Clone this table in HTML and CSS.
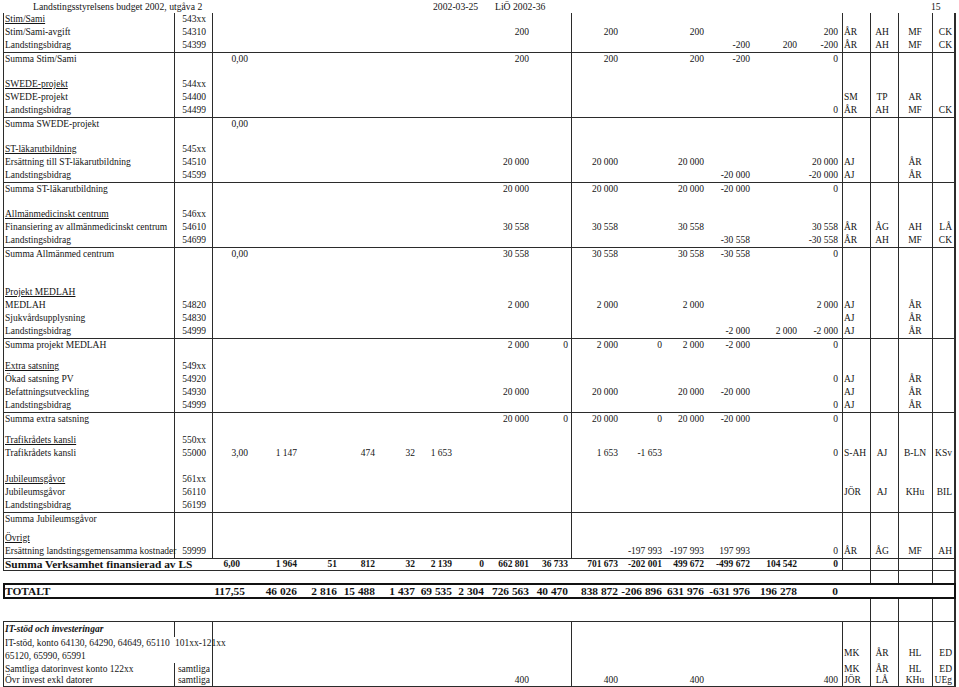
FILE: index.html
```html
<!DOCTYPE html>
<html lang="sv">
<head>
<meta charset="utf-8">
<title>Landstingsstyrelsens budget 2002</title>
<link rel="stylesheet" href="styles.css">
</head>
<body>
<div class="head"><span class="h-title">Landstingsstyrelsens budget 2002, utgåva 2</span><span>2002-03-25</span><span>LiÖ 2002-36</span><span>15</span></div>
<div class="sheet">
  <div class="row std"><span class="a u">Stim/Sami</span><span class="b">543xx</span></div>
  <div class="row std"><span class="a">Stim/Sami-avgift</span><span class="b">54310</span><span class="n8">200</span><span class="n10">200</span><span class="n12">200</span><span class="n15">200</span><span class="k1">ÅR</span><span class="k2">AH</span><span class="k3">MF</span><span class="k4">CK</span></div>
  <div class="row std"><span class="a">Landstingsbidrag</span><span class="b">54399</span><span class="n13">-200</span><span class="n14">200</span><span class="n15">-200</span><span class="k1">ÅR</span><span class="k2">AH</span><span class="k3">MF</span><span class="k4">CK</span></div>
  <div class="row std top"><span class="a">Summa Stim/Sami</span><span class="n1">0,00</span><span class="n8">200</span><span class="n10">200</span><span class="n12">200</span><span class="n13">-200</span><span class="n15">0</span></div>
  <div class="row std"></div>
  <div class="row std"><span class="a u">SWEDE-projekt</span><span class="b">544xx</span></div>
  <div class="row std"><span class="a">SWEDE-projekt</span><span class="b">54400</span><span class="k1">SM</span><span class="k2">TP</span><span class="k3">AR</span></div>
  <div class="row std"><span class="a">Landstingsbidrag</span><span class="b">54499</span><span class="n15">0</span><span class="k1">ÅR</span><span class="k2">AH</span><span class="k3">MF</span><span class="k4">CK</span></div>
  <div class="row std top"><span class="a">Summa SWEDE-projekt</span><span class="n1">0,00</span></div>
  <div class="row std"></div>
  <div class="row std"><span class="a u">ST-läkarutbildning</span><span class="b">545xx</span></div>
  <div class="row std"><span class="a">Ersättning till ST-läkarutbildning</span><span class="b">54510</span><span class="n8">20 000</span><span class="n10">20 000</span><span class="n12">20 000</span><span class="n15">20 000</span><span class="k1">AJ</span><span class="k3">ÅR</span></div>
  <div class="row std"><span class="a">Landstingsbidrag</span><span class="b">54599</span><span class="n13">-20 000</span><span class="n15">-20 000</span><span class="k1">AJ</span><span class="k3">ÅR</span></div>
  <div class="row std top"><span class="a">Summa ST-läkarutbildning</span><span class="n8">20 000</span><span class="n10">20 000</span><span class="n12">20 000</span><span class="n13">-20 000</span><span class="n15">0</span></div>
  <div class="row std"></div>
  <div class="row std"><span class="a u">Allmänmedicinskt centrum</span><span class="b">546xx</span></div>
  <div class="row std"><span class="a">Finansiering av allmänmedicinskt centrum</span><span class="b">54610</span><span class="n8">30 558</span><span class="n10">30 558</span><span class="n12">30 558</span><span class="n15">30 558</span><span class="k1">ÅR</span><span class="k2">ÅG</span><span class="k3">AH</span><span class="k4">LÅ</span></div>
  <div class="row std"><span class="a">Landstingsbidrag</span><span class="b">54699</span><span class="n13">-30 558</span><span class="n15">-30 558</span><span class="k1">ÅR</span><span class="k2">AH</span><span class="k3">MF</span><span class="k4">CK</span></div>
  <div class="row std top"><span class="a">Summa Allmänmed centrum</span><span class="n1">0,00</span><span class="n8">30 558</span><span class="n10">30 558</span><span class="n12">30 558</span><span class="n13">-30 558</span><span class="n15">0</span></div>
  <div class="row std"></div>
  <div class="row std"></div>
  <div class="row std"><span class="a u">Projekt MEDLAH</span></div>
  <div class="row std"><span class="a">MEDLAH</span><span class="b">54820</span><span class="n8">2 000</span><span class="n10">2 000</span><span class="n12">2 000</span><span class="n15">2 000</span><span class="k1">AJ</span><span class="k3">ÅR</span></div>
  <div class="row std"><span class="a">Sjukvårdsupplysning</span><span class="b">54830</span><span class="k1">AJ</span><span class="k3">ÅR</span></div>
  <div class="row std"><span class="a">Landstingsbidrag</span><span class="b">54999</span><span class="n13">-2 000</span><span class="n14">2 000</span><span class="n15">-2 000</span><span class="k1">AJ</span><span class="k3">ÅR</span></div>
  <div class="row std top"><span class="a">Summa projekt MEDLAH</span><span class="n8">2 000</span><span class="n9">0</span><span class="n10">2 000</span><span class="n11">0</span><span class="n12">2 000</span><span class="n13">-2 000</span><span class="n15">0</span></div>
  <div class="row std h9"></div>
  <div class="row std"><span class="a u">Extra satsning</span><span class="b">549xx</span></div>
  <div class="row std"><span class="a">Ökad satsning PV</span><span class="b">54920</span><span class="n15">0</span><span class="k1">AJ</span><span class="k3">ÅR</span></div>
  <div class="row std"><span class="a">Befattningsutveckling</span><span class="b">54930</span><span class="n8">20 000</span><span class="n10">20 000</span><span class="n12">20 000</span><span class="n13">-20 000</span><span class="k1">AJ</span><span class="k3">ÅR</span></div>
  <div class="row std"><span class="a">Landstingsbidrag</span><span class="b">54999</span><span class="n15">0</span><span class="k1">AJ</span><span class="k3">ÅR</span></div>
  <div class="row std top"><span class="a">Summa extra satsning</span><span class="n8">20 000</span><span class="n9">0</span><span class="n10">20 000</span><span class="n11">0</span><span class="n12">20 000</span><span class="n13">-20 000</span><span class="n15">0</span></div>
  <div class="row std h9"></div>
  <div class="row std"><span class="a u">Trafikrådets kansli</span><span class="b">550xx</span></div>
  <div class="row std"><span class="a">Trafikrådets kansli</span><span class="b">55000</span><span class="n1">3,00</span><span class="n2">1 147</span><span class="n4">474</span><span class="n5">32</span><span class="n6">1 653</span><span class="n10">1 653</span><span class="n11">-1 653</span><span class="n15">0</span><span class="k1">S-AH</span><span class="k2">AJ</span><span class="k3">B-LN</span><span class="k4">KSv</span></div>
  <div class="row std"></div>
  <div class="row std"><span class="a u">Jubileumsgåvor</span><span class="b">561xx</span></div>
  <div class="row std"><span class="a">Jubileumsgåvor</span><span class="b">56110</span><span class="k1">JÖR</span><span class="k2">AJ</span><span class="k3">KHu</span><span class="k4">BIL</span></div>
  <div class="row std"><span class="a">Landstingsbidrag</span><span class="b">56199</span></div>
  <div class="row std top"><span class="a">Summa Jubileumsgåvor</span></div>
  <div class="row std h7"></div>
  <div class="row std"><span class="a u">Övrigt</span></div>
  <div class="row std"><span class="a">Ersättning landstingsgemensamma kostnader</span><span class="b">59999</span><span class="n11">-197 993</span><span class="n12">-197 993</span><span class="n13">197 993</span><span class="n15">0</span><span class="k1">ÅR</span><span class="k2">ÅG</span><span class="k3">MF</span><span class="k4">AH</span></div>
  <div class="row sv top bot"><span class="a">Summa Verksamhet finansierad av LS</span><span class="n1">6,00</span><span class="n2">1 964</span><span class="n3">51</span><span class="n4">812</span><span class="n5">32</span><span class="n6">2 139</span><span class="n7">0</span><span class="n8">662 801</span><span class="n9">36 733</span><span class="n10">701 673</span><span class="n11">-202 001</span><span class="n12">499 672</span><span class="n13">-499 672</span><span class="n14">104 542</span><span class="n15">0</span></div>
  <div class="row gap h12"></div>
  <div class="row tot"><span class="a">TOTALT</span><span class="n1">117,55</span><span class="n2">46 026</span><span class="n3">2 816</span><span class="n4">15 488</span><span class="n5">1 437</span><span class="n6">69 535</span><span class="n7">2 304</span><span class="n8">726 563</span><span class="n9">40 470</span><span class="n10">838 872</span><span class="n11">-206 896</span><span class="n12">631 976</span><span class="n13">-631 976</span><span class="n14">196 278</span><span class="n15">0</span></div>
  <div class="row gap h22"></div>
  <div class="row itl it0 top"><span class="a ith">IT-stöd och investeringar</span></div>
  <div class="row itk it1"><span class="a">IT-stöd, konto 64130, 64290, 64649, 65110<br>65120, 65990, 65991</span><span class="b bl">101xx-121xx</span><span class="k1 low">MK</span><span class="k2 low">ÅR</span><span class="k3 low">HL</span><span class="k4 low">ED</span></div>
  <div class="row itl it2"><span class="a">Samtliga datorinvest konto 122xx</span><span class="b">samtliga</span><span class="k1">MK</span><span class="k2">ÅR</span><span class="k3">HL</span><span class="k4">ED</span></div>
  <div class="row itl it3 bot"><span class="a">Övr invest exkl datorer</span><span class="b">samtliga</span><span class="n8">400</span><span class="n10">400</span><span class="n12">400</span><span class="n15">400</span><span class="k1">JÖR</span><span class="k2">LÅ</span><span class="k3">KHu</span><span class="k4">UEg</span></div>
</div>
</body>
</html>
```

FILE: styles.css
```css
:root {
  --l: #2b2b2b;
}

html, body {
  margin: 0;
  padding: 0;
  background: #fff;
}

body {
  font-family: "Liberation Serif", "Times New Roman", serif;
  font-size: 9.5px;
  color: #141414;
  width: 959px;
  height: 687px;
  overflow: hidden;
}

.head {
  display: grid;
  grid-template-columns: 433px 62px 436px 1fr;
  height: 13px;
  line-height: 13px;
  font-size: 9.7px;
  white-space: nowrap;
}

.h-title {
  padding-left: 33px;
}

.sheet {
  margin-left: 3px;
  width: 953px;
}

.row {
  display: grid;
  grid-template-columns: 171px 38px 39px 49px 40px 38px 40px 37px 32px 45px 39px 50px 44px 42px 46px 47px 42px 28px 28px 34px 24px;
  height: 13px;
  line-height: 13px;
  box-sizing: border-box;
  white-space: nowrap;
  background-repeat: no-repeat;
}

.row > span {
  grid-row: 1;
}

.std,
.itl {
  background-image: linear-gradient(to right,
    var(--l) 0 1px, transparent 1px 171px,
    var(--l) 171px 172px, transparent 172px 209px,
    var(--l) 209px 210px, transparent 210px 568px,
    var(--l) 568px 569px, transparent 569px 839px,
    var(--l) 839px 840px, transparent 840px 867px,
    var(--l) 867px 868px, transparent 868px 895px,
    var(--l) 895px 896px, transparent 896px 929px,
    var(--l) 929px 930px, transparent 930px 951px,
    var(--l) 951px 953px);
}

.itk {
  background-image: linear-gradient(to right,
    var(--l) 0 1px, transparent 1px 209px,
    var(--l) 209px 210px, transparent 210px 568px,
    var(--l) 568px 569px, transparent 569px 839px,
    var(--l) 839px 840px, transparent 840px 867px,
    var(--l) 867px 868px, transparent 868px 895px,
    var(--l) 895px 896px, transparent 896px 929px,
    var(--l) 929px 930px, transparent 930px 951px,
    var(--l) 951px 953px);
}

.sv {
  background-image: linear-gradient(to right,
    var(--l) 0 1px, transparent 1px 839px,
    var(--l) 839px 840px, transparent 840px 867px,
    var(--l) 867px 868px, transparent 868px 895px,
    var(--l) 895px 896px, transparent 896px 929px,
    var(--l) 929px 930px, transparent 930px 951px,
    var(--l) 951px 953px);
}

.gap {
  background-image: linear-gradient(to right,
    transparent 0 867px,
    var(--l) 867px 868px, transparent 868px 895px,
    var(--l) 895px 896px, transparent 896px 929px,
    var(--l) 929px 930px, transparent 930px 951px,
    var(--l) 951px 953px);
}

.top {
  border-top: 1px solid var(--l);
}

.bot {
  border-bottom: 1px solid var(--l);
}

.h7 { height: 7px; }
.h9 { height: 9px; }
.h12 { height: 12px; }
.h22 { height: 22px; }

.a {
  grid-column: 1;
  padding-left: 2px;
}

.b {
  grid-column: 2;
  text-align: center;
  padding-left: 2px;
}

.bl {
  text-align: left;
  padding-left: 1px;
}

.u {
  text-decoration: underline;
  text-underline-offset: 1px;
}

.n1 { grid-column: 3; }
.n2 { grid-column: 4; }
.n3 { grid-column: 5; }
.n4 { grid-column: 6; }
.n5 { grid-column: 7; }
.n6 { grid-column: 8; }
.n7 { grid-column: 9; }
.n8 { grid-column: 10; }
.n9 { grid-column: 11; }
.n10 { grid-column: 12; }
.n11 { grid-column: 13; }
.n12 { grid-column: 14; }
.n13 { grid-column: 15; }
.n14 { grid-column: 16; }
.n15 { grid-column: 17; }

.n1, .n2, .n3, .n4, .n5, .n6, .n7, .n8,
.n9, .n10, .n11, .n12, .n13, .n14, .n15 {
  text-align: right;
  padding-right: 3px;
}

.n15 {
  padding-right: 4px;
}

.k1 {
  grid-column: 18;
  padding-left: 2px;
}

.k2 {
  grid-column: 19;
  text-align: center;
  padding-right: 4px;
}

.k3 {
  grid-column: 20;
  text-align: center;
}

.k4 {
  grid-column: 21;
  text-align: right;
  padding-right: 4px;
}

/* Summa Verksamhet */
.sv {
  line-height: 11px;
  font-weight: bold;
}

.sv .a {
  font-size: 11.4px;
}

.sv .n1 {
  padding-right: 11px;
}

/* TOTALT box */
.tot {
  height: 16px;
  line-height: 16px;
  font-weight: bold;
  font-size: 11.4px;
  box-shadow: inset 0 0 0 2px #111;
}

.tot .n1 {
  padding-right: 6px;
}

/* IT block */
.it0 {
  height: 16px;
  line-height: 15px;
}

.ith {
  font-weight: bold;
  font-style: italic;
}

.it1 {
  height: 26px;
}

.it1 .a {
  align-self: start;
}

.low {
  align-self: end;
  padding-bottom: 3px;
}

.it2 {
  height: 12px;
  line-height: 12px;
}

.it3 {
  height: 12px;
  line-height: 11px;
}
```
